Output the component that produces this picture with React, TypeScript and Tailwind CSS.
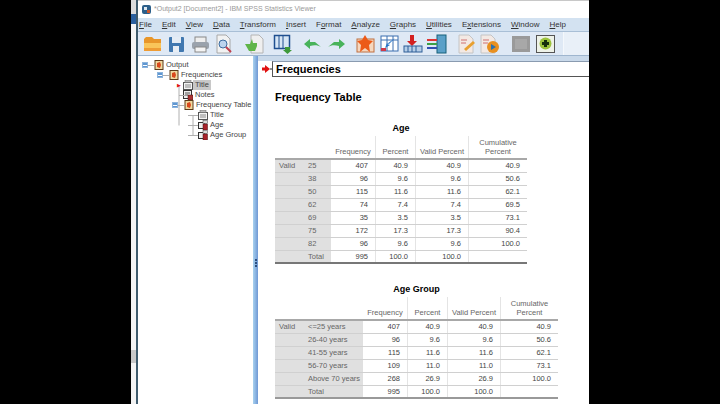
import type { ReactNode } from "react";

const menus: [string, string, string][] = [
  ["", "F", "ile"], ["", "E", "dit"], ["", "V", "iew"], ["", "D", "ata"], ["", "T", "ransform"], ["", "I", "nsert"],
  ["F", "o", "rmat"], ["", "A", "nalyze"], ["", "G", "raphs"], ["", "U", "tilities"], ["E", "x", "tensions"], ["", "W", "indow"], ["", "H", "elp"],
];

const ageRows = [
  ["25", "407", "40.9", "40.9", "40.9"],
  ["38", "96", "9.6", "9.6", "50.6"],
  ["50", "115", "11.6", "11.6", "62.1"],
  ["62", "74", "7.4", "7.4", "69.5"],
  ["69", "35", "3.5", "3.5", "73.1"],
  ["75", "172", "17.3", "17.3", "90.4"],
  ["82", "96", "9.6", "9.6", "100.0"],
  ["Total", "995", "100.0", "100.0", ""],
];

const groupRows = [
  ["<=25 years", "407", "40.9", "40.9", "40.9"],
  ["26-40 years", "96", "9.6", "9.6", "50.6"],
  ["41-55 years", "115", "11.6", "11.6", "62.1"],
  ["56-70 years", "109", "11.0", "11.0", "73.1"],
  ["Above 70 years", "268", "26.9", "26.9", "100.0"],
  ["Total", "995", "100.0", "100.0", ""],
];

// w is the slot width, drawings start at x=2 inside the slot
const Tool = ({ children, w }: { children: ReactNode; w: number }) => (
  <svg width={w} height="20" viewBox={`0 0 ${w} 20`} className="shrink-0 overflow-visible">{children}</svg>
);

type NodeKind = "book" | "title" | "notes" | "table";

const NodeIcon = ({ kind }: { kind: NodeKind }) => (
  <svg width="10" height="10" viewBox="0 0 10 10" className="shrink-0">
    {kind === "book" && (
      <>
        <rect x="1" y="0.5" width="8" height="9" fill="#f0d9a0" stroke="#5b3a1a" />
        <path d="M3 3l3-1 1 3-1 3-3-1z" fill="#d9481c" />
      </>
    )}
    {kind === "title" && (
      <>
        <rect x="0.5" y="2.500" width="9" height="7" fill="#f4f4f4" stroke="#555" />
        <rect x="2" y="0.500" width="6" height="2" fill="#bbb" stroke="#666" strokeWidth="0.5" />
        <path d="M2 5h6M2 7h6" stroke="#888" />
      </>
    )}
    {kind === "notes" && (
      <>
        <rect x="0.5" y="0.500" width="8" height="8" fill="#eee" stroke="#333" />
        <path d="M2 3h5M2 5h3" stroke="#555" />
        <rect x="5" y="5" width="5" height="5" fill="#a33" stroke="#411" strokeWidth="0.5" />
      </>
    )}
    {kind === "table" && (
      <>
        <rect x="0.5" y="2.500" width="6" height="6" fill="#eee" stroke="#333" />
        <rect x="5" y="0.500" width="4.500" height="3" fill="#ddd" stroke="#444" strokeWidth="0.5" />
        <rect x="5" y="4" width="4.500" height="6" fill="#a8232a" stroke="#411" strokeWidth="0.5" />
      </>
    )}
  </svg>
);

const Box = () => (
  <span className="w-[6px] h-[6px] bg-[#5f97d2] border border-[#8db4dc] flex items-center justify-center shrink-0">
    <span className="w-[4px] h-px bg-white" />
  </span>
);

const TreeRow = ({ lead, icon, label, selected }: { lead: ReactNode; icon: NodeKind; label: string; selected?: boolean }) => (
  <div className="h-[10px] flex items-center whitespace-nowrap">
    {lead}
    <NodeIcon kind={icon} />
    <span className={`px-[2px] text-[7.5px] leading-[10px] text-[#444] ${selected ? "bg-[#c8c8c8]" : ""}`}>{label}</span>
  </div>
);

const SpssTable = ({ title, rows, widths, stubW, bottom }: { title: string; rows: string[][]; widths: number[]; stubW: string; bottom: string }) => (
  <div className="text-[7.5px] text-[#444]">
    <div className="text-center font-bold text-[9px] text-black leading-[10px]">{title}</div>
    <div className="flex h-[27px] border-b-2 border-[#a8a8a8]">
      <div className={`${stubW} shrink-0`} />
      {["Frequency", "Percent", "Valid Percent", "Cumulative Percent"].map((h, i) => (
        <div key={h} style={{ width: widths[i] }} className={`mt-[3px] flex items-end justify-center text-center leading-[9px] pb-[2px] text-[#666] ${i < 3 ? "border-r border-[#e4e4e4]" : ""}`}>
          <span className={i === 3 ? "w-[40px]" : ""}>{h}</span>
        </div>
      ))}
    </div>
    <div className={`border-b-2 ${bottom}`}>
      {rows.map((r, ri) => (
        <div key={ri} className={`flex ${ri < rows.length - 1 ? "h-[13px] border-b border-[#d0d0d0]" : "h-[11px]"}`}>
          <div className={`${stubW} shrink-0 bg-[#e0e0e0] flex items-center text-[#666]`}>
            <div className="w-[33px] pl-[4px] shrink-0">{ri === 0 ? "Valid" : ""}</div>
            <div className="whitespace-nowrap">{r[0]}</div>
          </div>
          {r.slice(1).map((c, i) => (
            <div key={i} style={{ width: widths[i] }} className={`flex items-center justify-end pr-[7px] text-[#444] ${i < 3 ? "border-r border-[#e4e4e4]" : ""}`}>{c}</div>
          ))}
        </div>
      ))}
    </div>
  </div>
);

export default function App() {
  return (
    <div className="w-[720px] h-[404px] bg-black flex overflow-hidden font-['Liberation_Sans',sans-serif]">
      {/* sliver of the window behind the viewer */}
      <div className="w-[5px] ml-[131px] shrink-0 h-full flex flex-col bg-[#f4f4f4]">
        <div className="h-[14px] bg-[#dcdcdc]" />
        <div className="h-[10px] bg-[#2a5f9e]" />
        <div className="h-[326px]" />
        <div className="h-[13px] bg-[#c8c8c8]" />
      </div>
      <div className="w-[453px] shrink-0 h-full bg-white flex flex-col border-l-2 border-l-[#3f5b6c]">
        <div className="h-[18px] bg-white flex items-center pl-[3px] border-t border-[#c8c8c8]">
          <svg width="11" height="11" viewBox="0 0 11 11"><rect x="1" y="1" width="9" height="9" rx="2" fill="#2c5f8a" /><rect x="3" y="3" width="3" height="3" fill="#dfe8f0" /><rect x="6" y="6" width="3" height="3" fill="#c9552b" /></svg>
          <span className="ml-[2px] text-[7px] text-[#999] whitespace-nowrap">*Output2 [Document2] - IBM SPSS Statistics Viewer</span>
        </div>
        <div className="h-[14px] bg-[#d3e2f1] flex items-center pl-[1px] gap-[10px] text-[8px] text-[#333] border-b border-[#a9bfd6]">
          {menus.map(([a, u, b]) => (
            <span key={u + b}>{a}<span className="underline">{u}</span>{b}</span>
          ))}
        </div>
        <div className="h-[23px] bg-[#dfe9f5] flex items-center pl-[4px]">
          <Tool w={25}><path d="M2 5l2-2h6l2 2h7v5H2z" fill="#e8962a" /><path d="M2 9h17v8H2z" fill="#f9c55a" /><path d="M2 14h17v3H2z" fill="#ee9c35" /></Tool>
          <Tool w={23}><rect x="2" y="3" width="15" height="15" rx="1" fill="#4178b0" /><rect x="5" y="3" width="9" height="6" fill="#e4ecf5" /><rect x="6" y="12" width="6" height="6" fill="#e8eef5" /></Tool>
          <Tool w={24}><rect x="5" y="3" width="11" height="6" fill="#eee" stroke="#888" /><rect x="2" y="8" width="17" height="7" rx="2" fill="#9aa2ac" /><rect x="5" y="13" width="11" height="5" fill="#f4f4f4" stroke="#888" /></Tool>
          <Tool w={28}><path d="M3 1h9l4 4v14H3z" fill="#f2f2f2" stroke="#a8a8a8" /><circle cx="9" cy="10" r="4" fill="#bcd4ee" stroke="#3c6ca0" /><path d="M12 13l5 5" stroke="#c04050" strokeWidth="2" /></Tool>
          <Tool w={30}><path d="M9 1h8l4 4v14H9z" fill="#efefef" stroke="#b4b4b4" /><path d="M10 5l1 4h4v3l-2 5H7L3 10h5z" fill="#5fb548" /></Tool>
          <Tool w={30}><rect x="2.500" y="1.500" width="15" height="13" fill="#d7e6f5" stroke="#1f4f90" strokeWidth="1.500" /><path d="M7 2v12M11 2v12" stroke="#1f4f90" /><path d="M13 13h5v3h2l-4.500 4-4.500-4h2z" fill="#3f9a3a" /></Tool>
          <Tool w={24}><path d="M2 10l6-5v3h5l6 5c-3-2-7-2-11-1v3z" fill="#48b35a" /></Tool>
          <Tool w={29}><path d="M19 10l-6-5v3H8l-6 5c3-2 7-2 11-1v3z" fill="#48b35a" /></Tool>
          <Tool w={24}><rect x="2" y="5" width="17" height="13" fill="#f5d8c0" stroke="#c07040" /><path d="M10 1l3 5 5 1-4 4 1 7-5-4-5 4 1-7-4-4 5-1z" fill="#ec5a18" /></Tool>
          <Tool w={23}><rect x="2" y="2" width="17" height="15" fill="#fff" stroke="#3b6fb0" /><path d="M2 6h17M8 2v15M14 2v15" stroke="#3b6fb0" /><path d="M16 4l-8 6 3 1-5 3 2-5 2 1z" fill="#2474c8" /><rect x="2" y="14" width="5" height="3" fill="#d03a4a" /></Tool>
          <Tool w={23}><path d="M8 1h4v6h3l-5 5-5-5h3z" fill="#d32020" /><rect x="2" y="12" width="18" height="6" fill="#b7cfe8" stroke="#2e5f98" /><path d="M6 12v6M10 12v6M14 12v6" stroke="#2e5f98" /></Tool>
          <Tool w={31}><rect x="12" y="1" width="9" height="18" fill="#5aa0c8" stroke="#17607a" /><path d="M2 5h10v2H2z" fill="#d33" /><path d="M2 9h10v2H2z" fill="#3aa048" /><path d="M2 13h10v2H2z" fill="#3050b0" /></Tool>
          <Tool w={22}><path d="M3 1h10l4 4v14H3z" fill="#f3e9e4" stroke="#c4c4c4" /><path d="M5 6h6M5 9h5" stroke="#d07070" /><path d="M8 15l9-8 2 2-9 8z" fill="#e8a030" /></Tool>
          <Tool w={32}><path d="M3 1h10l4 4v14H3z" fill="#f3e9e4" stroke="#c4c4c4" /><path d="M5 6h6M5 9h5" stroke="#d07070" /><circle cx="15" cy="13" r="6" fill="#e89020" /><path d="M13 10l5 3-5 3z" fill="#2a70b0" /></Tool>
          <Tool w={26}><rect x="2" y="2" width="18" height="16" fill="#9a9a9a" /><rect x="5" y="5" width="12" height="10" fill="#a8a8a8" /></Tool>
          <span className="w-[19px] h-[18px] border border-[#555] bg-[#eef2e8] flex items-center justify-center shrink-0">
            <svg width="13" height="13" viewBox="0 0 13 13"><circle cx="6.500" cy="6.500" r="6" fill="#9cc23c" /><path d="M5 3h3v2h2v3H8v2H5V8H3V5h2z" fill="#16300c" /></svg>
          </span>
          <span className="ml-[8px] flex-1 self-stretch bg-[#e9f0f8] border-l border-[#f4f8fc]" />
        </div>
        <div className="flex-1 flex min-h-0 border-t border-[#9fb6cf]">
          <div className="w-[115px] shrink-0 pt-[4px] flex flex-col relative">
            <svg width="115" height="90" className="absolute left-0 top-0" stroke="#b0b0b0">
              <path d="M10 9.500h6M25 19.500h6M41 29.500v40M36 49.500h10M41 39.500h6M55 59.500v20M50 69.500h10M50 79.500h10M50 59.500h10" fill="none" />
            </svg>
            <TreeRow lead={<span className="ml-[4px] mr-[6px] flex relative"><Box /></span>} icon="book" label="Output" />
            <TreeRow lead={<span className="ml-[19px] mr-[6px] flex relative"><Box /></span>} icon="book" label="Frequencies" />
            <TreeRow lead={<span className="ml-[39px] w-[6px] text-[#e01010] text-[5px] leading-none relative">▶</span>} icon="title" label="Title" selected />
            <TreeRow lead={<span className="ml-[45px]" />} icon="notes" label="Notes" />
            <TreeRow lead={<span className="ml-[34px] mr-[6px] flex relative"><Box /></span>} icon="book" label="Frequency Table" />
            <TreeRow lead={<span className="ml-[60px]" />} icon="title" label="Title" />
            <TreeRow lead={<span className="ml-[60px]" />} icon="table" label="Age" />
            <TreeRow lead={<span className="ml-[60px]" />} icon="table" label="Age Group" />
          </div>
          <div className="w-[5px] shrink-0 bg-gradient-to-r from-[#a9d2ef] to-[#6f98d4] flex flex-col items-center pt-[203px] gap-px">
            <span className="w-[2px] h-[2px] bg-[#2d4f80]" />
            <span className="w-[2px] h-[2px] bg-[#2d4f80]" />
            <span className="w-[2px] h-[2px] bg-[#2d4f80]" />
          </div>
          <div className="flex-1 min-w-0 overflow-hidden">
            <div className="h-[5px] bg-[#c9d9ea]" />
            <div className="flex items-center h-[16px]">
              <svg width="14" height="10" viewBox="0 0 14 10" className="shrink-0">
                <path d="M4 3.500h3V1l5 4-5 4V6.500H4z" fill="#e01010" />
                <path d="M12 5h2" stroke="#222" />
              </svg>
              <div className="flex-1 h-full border border-r-0 border-[#555] border-t-[#8a9bb0] flex items-center pl-[3px] font-bold text-[11px] text-black">Frequencies</div>
            </div>
            <div className="ml-[17px] mt-[14px] font-bold text-[11px] leading-[13px] text-black">Frequency Table</div>
            <div className="ml-[17px] mt-[19px] w-[252px]">
              <SpssTable title="Age" rows={ageRows} widths={[45, 40, 53, 58]} stubW="w-[56px]" bottom="border-[#777]" />
            </div>
            <div className="ml-[17px] mt-[20px] w-[283px]">
              <SpssTable title="Age Group" rows={groupRows} widths={[45, 40, 53, 57]} stubW="w-[88px]" bottom="border-[#999]" />
            </div>
          </div>
        </div>
      </div>
    </div>
  );
}
